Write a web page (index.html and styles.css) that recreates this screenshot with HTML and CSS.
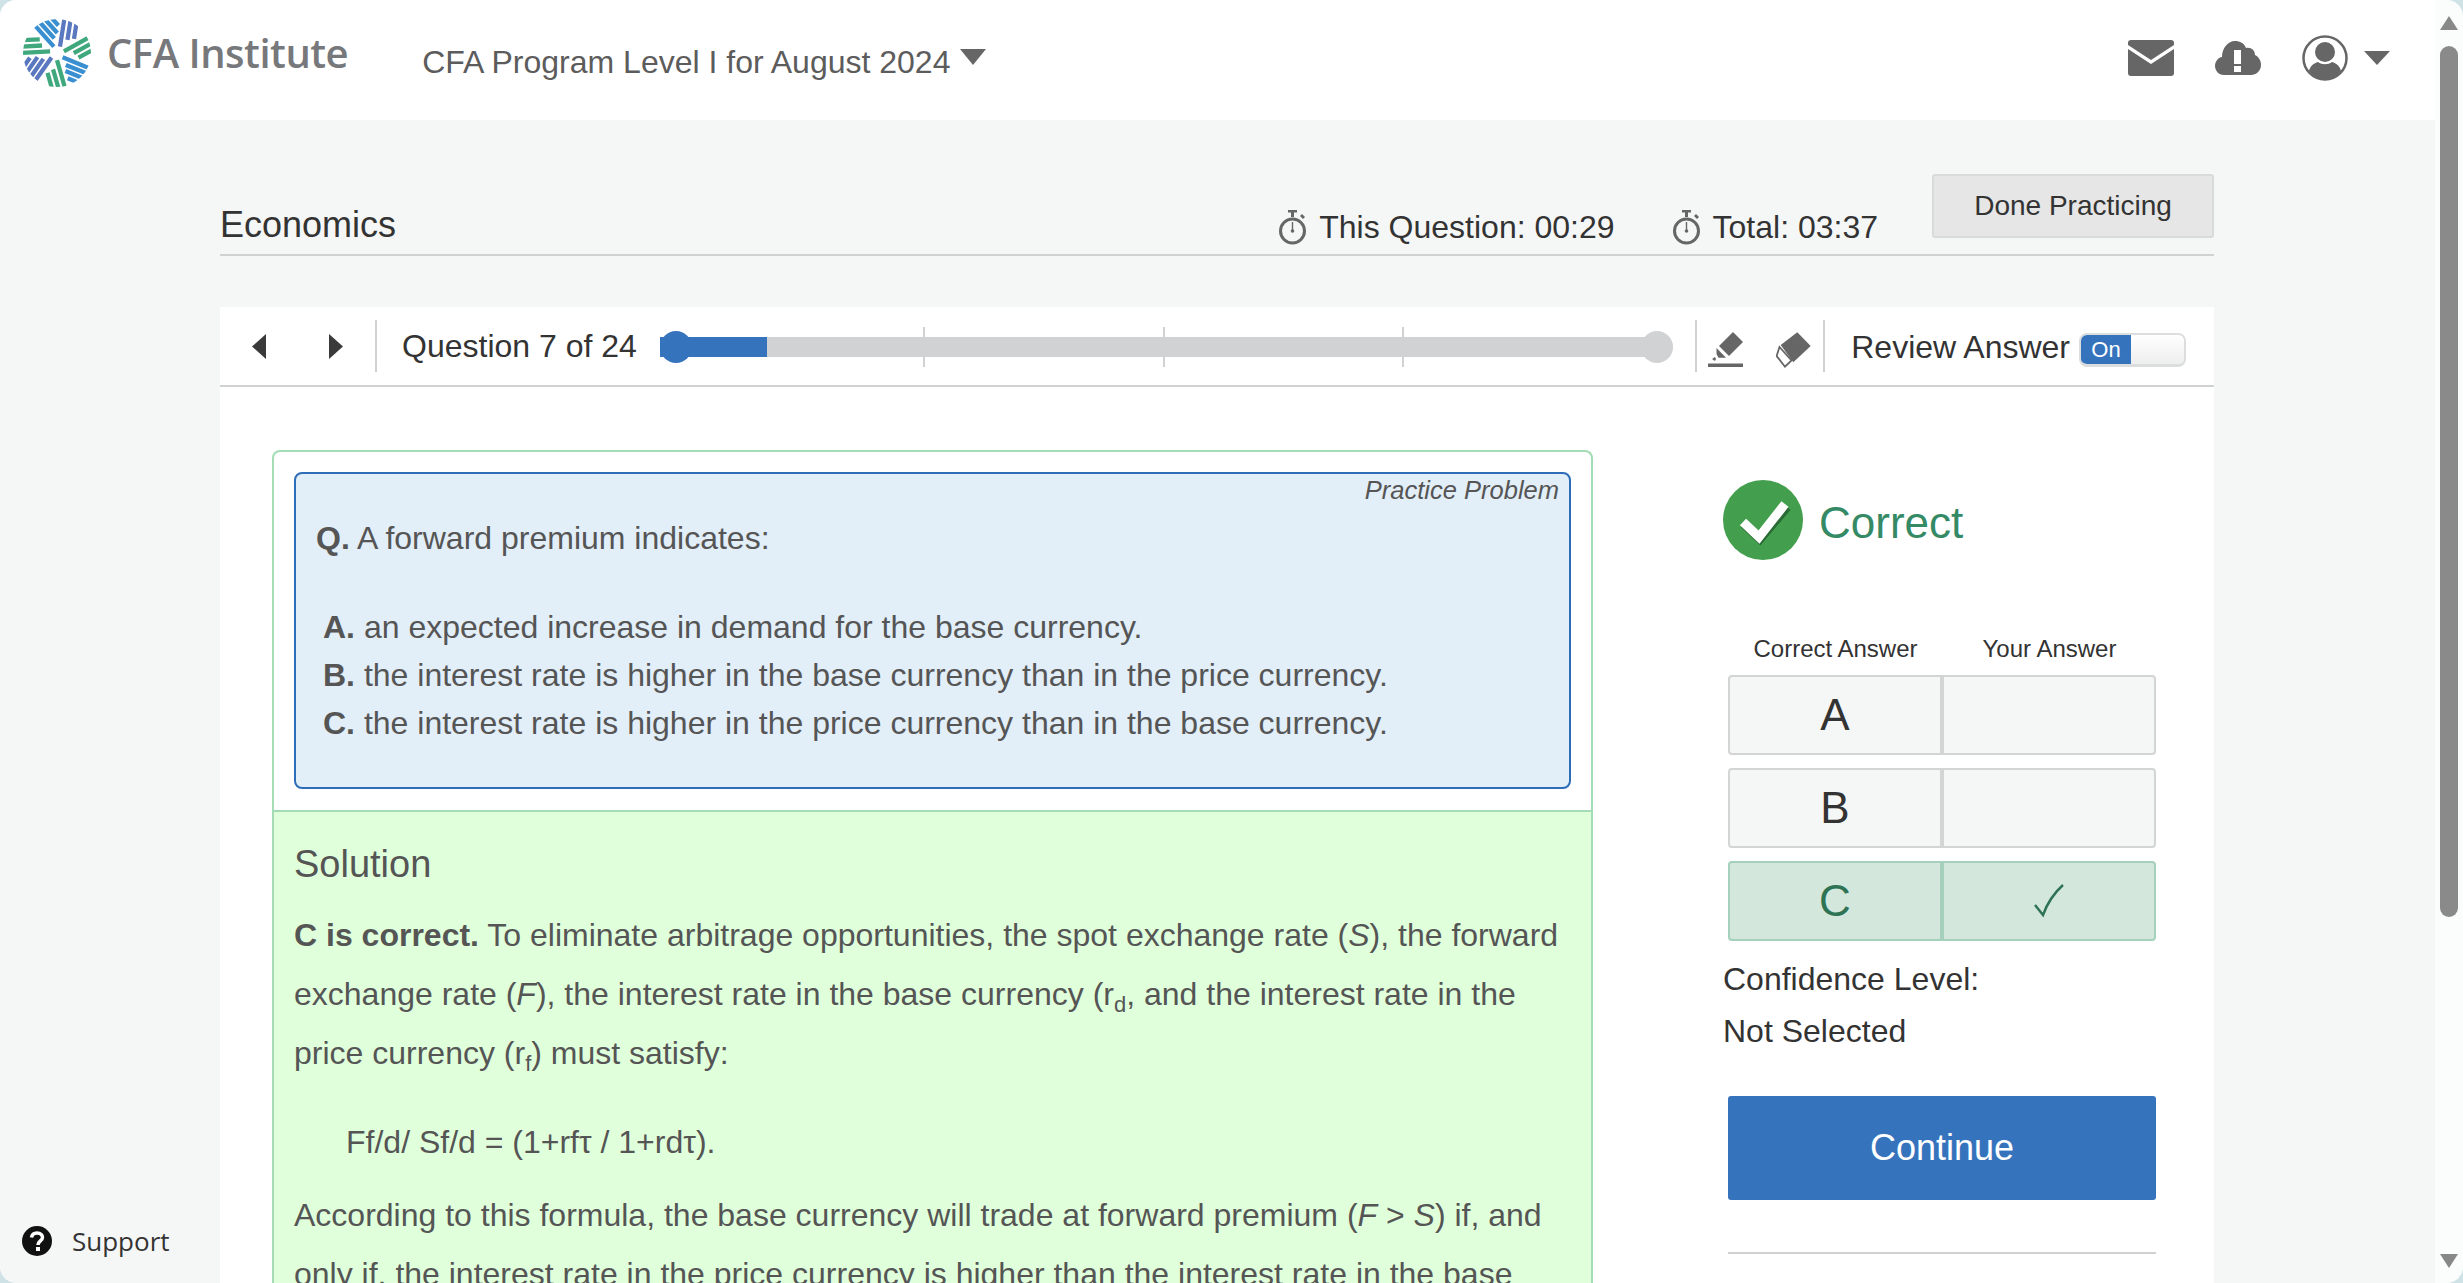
FILE: index.html
```html
<!DOCTYPE html>
<html lang="en">
<head>
  <meta charset="UTF-8" />
  <title>CFA Program Level I - Practice</title>
  <link rel="stylesheet" href="styles.css">
</head>
<body>

<div class="window">
  <div class="page">

    <div class="topbar">
      <svg class="logo" viewBox="-36 -36 72 72">
        <defs>
          <clipPath id="logoClip"><circle r="35"/></clipPath>
          <g id="wedge3" fill="none" stroke-width="4.400">
            <path d="M2-7V-36M8.500-15V-36M15-17V-36"/>
          </g>
          <g id="wedge4" fill="none" stroke-width="4.400">
            <path d="M2-7V-36M8-13V-36M14-15V-36M20-20V-36"/>
          </g>
        </defs>
        <g clip-path="url(#logoClip)">
          <use href="#wedge3" stroke="#5a78c0" transform="rotate(9)"/>
          <use href="#wedge3" stroke="#3fa87c" transform="rotate(61)"/>
          <use href="#wedge4" stroke="#3a8fd1" transform="rotate(112)"/>
          <use href="#wedge3" stroke="#3fa87c" transform="rotate(164)"/>
          <use href="#wedge4" stroke="#5a78c0" transform="rotate(215)"/>
          <use href="#wedge3" stroke="#3fa87c" transform="rotate(267)"/>
          <use href="#wedge4" stroke="#3a8fd1" transform="rotate(318)"/>
        </g>
      </svg>
      <span class="logo-name">CFA Institute</span>
      <span class="program">CFA Program Level I for August 2024</span>
      <svg class="caret-program" viewBox="0 0 26 16"><path d="M0 0H26L13 16Z"/></svg>

      <div class="top-icons">
        <svg class="icon-mail" viewBox="0 0 46 36">
          <path d="M3 0H43Q46 0 46 3V5L23 20 0 5V3Q0 0 3 0Z"/>
          <path d="M0 9L23 24 46 9V33Q46 36 43 36H3Q0 36 0 33Z"/>
        </svg>
        <svg class="icon-cloud" viewBox="0 0 46 34">
          <path fill-rule="evenodd" d="M9 34C3 34 0 29 0 25 0 20 4 16 7 16 7 7 13 0 20 0 25 0 29 2 31 7 36 6 40 9 40 14 44 16 46 20 46 24 46 30 41 34 36 34ZM19 9V23H26V9ZM19 25V31H26V25Z"/>
        </svg>
        <svg class="icon-user" viewBox="0 0 46 46">
          <circle cx="23" cy="23" r="21.500" fill="none" stroke="#666" stroke-width="2.500"/>
          <circle cx="23" cy="17" r="10"/>
          <path d="M7 36C8 31 12 28 16 27 20 30 26 30 30 27 34 28 38 31 39 36 34 42 28 44 23 44 18 44 12 42 7 36Z"/>
        </svg>
        <svg class="caret-user" viewBox="0 0 26 14"><path d="M0 0H26L13 14Z"/></svg>
      </div>
    </div>

    <div class="content">
      <div class="section-head">
        <h1 class="section-title">Economics</h1>
        <div class="timers">
          <div class="timer">
            <svg class="icon-watch" viewBox="0 0 29 36">
              <path d="M10 0H19V2.500H16V7H13V2.500H10Z"/>
              <path d="M24 4L27 7 25 9 22 6Z"/>
              <circle cx="14.500" cy="21" r="12" fill="none" stroke="#666" stroke-width="3"/>
              <path d="M13.800 12H15.200V20H13.800Z"/>
              <circle cx="14.500" cy="21" r="1.800"/>
            </svg>
            This Question: 00:29
          </div>
          <div class="timer">
            <svg class="icon-watch" viewBox="0 0 29 36">
              <path d="M10 0H19V2.500H16V7H13V2.500H10Z"/>
              <path d="M24 4L27 7 25 9 22 6Z"/>
              <circle cx="14.500" cy="21" r="12" fill="none" stroke="#666" stroke-width="3"/>
              <path d="M13.800 12H15.200V20H13.800Z"/>
              <circle cx="14.500" cy="21" r="1.800"/>
            </svg>
            Total: 03:37
          </div>
        </div>
        <button class="done-btn">Done Practicing</button>
      </div>

      <div class="toolbar">
        <div class="tool-arrows">
          <svg class="arrow" viewBox="0 0 14 25"><path d="M14 0V25L0 12.500Z"/></svg>
          <svg class="arrow" viewBox="0 0 14 25"><path d="M0 0V25L14 12.500Z"/></svg>
        </div>
        <div class="question-count">Question 7 of 24</div>
        <div class="slider">
          <div class="slider-fill"></div>
          <span class="slider-tick" style="left: 26%"></span>
          <span class="slider-tick" style="left: 49.700%"></span>
          <span class="slider-tick" style="left: 73.200%"></span>
          <span class="slider-knob"></span>
          <span class="slider-end"></span>
        </div>
        <div class="tool-icons">
          <svg class="tool-icon" viewBox="0 0 36 36">
            <path d="M25 0L35 10 21 24 11 14Z"/>
            <path d="M8.500 16L18 25.700H10.500L8.500 22Z"/>
            <path d="M4 27L7 25 8 27 7 29Z"/>
            <path d="M0 31.500H35V35H0Z"/>
          </svg>
          <svg class="tool-icon" viewBox="0 0 36 36">
            <path d="M21.300 .3L34.700 14 17.300 30.300 4.700 13Z"/>
            <path d="M3.500 15L15.500 28.500 9 34.700 .6 24Z" fill="#fff" stroke="#666" stroke-width="1.800"/>
          </svg>
        </div>
        <div class="review">
          <span class="review-label">Review Answer</span>
          <div class="toggle"><span class="toggle-on">On</span><span class="toggle-off"></span></div>
        </div>
      </div>

      <div class="card">
        <div class="quiz">
          <div class="question">
            <div class="practice-tag">Practice Problem</div>
            <p class="question-text"><b>Q.</b> A forward premium indicates:</p>
            <ul class="options">
              <li><b>A.</b> an expected increase in demand for the base currency.</li>
              <li><b>B.</b> the interest rate is higher in the base currency than in the price currency.</li>
              <li><b>C.</b> the interest rate is higher in the price currency than in the base currency.</li>
            </ul>
          </div>
          <div class="solution">
            <h2 class="solution-title">Solution</h2>
            <p><b>C is correct.</b> To eliminate arbitrage opportunities, the spot exchange rate (<i>S</i>), the forward exchange rate (<i>F</i>), the interest rate in the base currency (r<sub>d</sub>, and the interest rate in the price currency (r<sub>f</sub>) must satisfy:</p>
            <p class="formula">Ff/d/ Sf/d = (1+rfτ / 1+rdτ).</p>
            <p>According to this formula, the base currency will trade at forward premium (<i>F</i> &gt; <i>S</i>) if, and only if, the interest rate in the price currency is higher than the interest rate in the base currency.</p>
          </div>
        </div>

        <div class="result">
          <div class="verdict">
            <svg class="icon-check" viewBox="0 0 80 80">
              <circle cx="40" cy="40" r="40" fill="#439e4d"/>
              <path d="M21 44L37 59 64 27" fill="none" stroke="#2a6b35" stroke-width="9"/>
              <path d="M20 42L36 57 62 24" fill="none" stroke="#fff" stroke-width="9"/>
            </svg>
            <span class="verdict-text">Correct</span>
          </div>
          <div class="answer-heads">
            <span>Correct Answer</span>
            <span>Your Answer</span>
          </div>
          <div class="answer-row">
            <div class="answer-cell">A</div>
            <div class="answer-cell"></div>
          </div>
          <div class="answer-row">
            <div class="answer-cell">B</div>
            <div class="answer-cell"></div>
          </div>
          <div class="answer-row is-right">
            <div class="answer-cell">C</div>
            <div class="answer-cell">
              <svg class="icon-tick" viewBox="0 0 30 34"><path d="M1 21L9 31C13 20 20 9 29 1" fill="none" stroke="#2f7355" stroke-width="2.500"/></svg>
            </div>
          </div>
          <p class="confidence">Confidence Level:</p>
          <p class="confidence">Not Selected</p>
          <button class="continue-btn">Continue</button>
          <div class="result-rule"></div>
        </div>
      </div>
    </div>

    <div class="support">
      <svg class="icon-help" viewBox="0 0 30 30">
        <circle cx="15" cy="15" r="15" fill="#111"/>
        <path d="M9.500 11.500C10 8 12.500 7 15 7 18.500 7 20.500 9 20.500 11.500 20.500 15 16 15 16 19" fill="none" stroke="#fff" stroke-width="3.500"/>
        <path d="M14 21H18V25H14Z" fill="#fff"/>
      </svg>
      Support
    </div>
  </div>

  <div class="scrollbar">
    <svg class="scroll-arrow" viewBox="0 0 18 14"><path d="M9 0L18 14H0Z"/></svg>
    <div class="scroll-thumb"></div>
    <svg class="scroll-arrow" viewBox="0 0 18 14"><path d="M0 0H18L9 14Z"/></svg>
  </div>
</div>

</body>
</html>
```

FILE: styles.css
```css
html, body {
  margin: 0;
  padding: 0;
  height: 1283px;
  overflow: hidden;
  background-color: #cfe3e6;
}

body {
  font-family: "Liberation Sans", Arial, sans-serif;
  color: #333;
}

.window {
  display: flex;
  height: 1283px;
  border-radius: 16px;
  overflow: hidden;
}

.page {
  flex: 1;
  position: relative;
  background-color: #f5f7f6;
  overflow: hidden;
}

/* top bar */
.topbar {
  height: 120px;
  background-color: #fff;
  display: flex;
  align-items: center;
  padding-left: 22px;
  padding-right: 45px;
}

.logo {
  width: 70px;
  height: 70px;
  flex: none;
  margin-top: -14px;
}

.logo-name {
  font-family: "Open Sans", sans-serif;
  font-size: 40px;
  font-weight: 600;
  color: #77787b;
  margin-left: 15px;
  margin-top: -15px;
  letter-spacing: -0.5px;
}

.program {
  font-size: 32px;
  color: #5c5c5c;
  margin-left: 74px;
  margin-top: 4px;
}

.caret-program {
  width: 26px;
  height: 16px;
  fill: #666;
  margin-left: 10px;
  margin-top: -6px;
}

.top-icons {
  margin-left: auto;
  display: flex;
  align-items: center;
  fill: #666;
  margin-top: -5px;
}

.icon-mail {
  width: 46px;
  height: 36px;
}

.icon-cloud {
  width: 46px;
  height: 34px;
  margin-left: 41px;
}

.icon-user {
  width: 46px;
  height: 46px;
  margin-left: 41px;
}

.caret-user {
  width: 26px;
  height: 14px;
  margin-left: 16px;
}

/* section heading */
.content {
  padding: 0 221px 0 220px;
}

.section-head {
  height: 134px;
  border-bottom: 2px solid #d0d1d2;
  display: flex;
  align-items: flex-end;
}

.section-title {
  margin: 0 0 7px 0;
  font-size: 36px;
  font-weight: normal;
  line-height: 44px;
}

.timers {
  margin-left: auto;
  display: flex;
  gap: 57px;
  margin-bottom: 8px;
}

.timer {
  display: flex;
  align-items: center;
  gap: 12px;
  font-size: 32px;
}

.icon-watch {
  width: 29px;
  height: 36px;
  fill: #666;
}

.done-btn {
  width: 282px;
  height: 64px;
  margin: 0 0 16px 54px;
  background-color: #e5e6e5;
  border: 2px solid #d9dadb;
  border-radius: 3px;
  font-family: inherit;
  font-size: 28px;
  color: #333;
}

/* toolbar */
.toolbar {
  margin-top: 51px;
  height: 78px;
  background-color: #fff;
  border-bottom: 2px solid #d0d1d2;
  display: flex;
  align-items: center;
}

.tool-arrows {
  display: flex;
  gap: 63px;
  padding: 0 32px 0 32px;
  height: 52px;
  align-items: center;
  border-right: 2px solid #d0d1d2;
}

.arrow {
  width: 14px;
  height: 25px;
  fill: #3a3a3a;
}

.question-count {
  font-size: 32px;
  margin-left: 25px;
}

.slider {
  position: relative;
  flex: 1;
  height: 20px;
  margin: 2px 22px 0 23px;
  background-color: #d1d2d4;
  border-radius: 10px;
}

.slider-fill {
  width: 107px;
  height: 20px;
  background-color: #3673bd;
}

.slider-tick {
  position: absolute;
  top: -10px;
  width: 2px;
  height: 40px;
  background-color: #d1d2d4;
}

.slider-knob,
.slider-end {
  position: absolute;
  top: -6px;
  width: 32px;
  height: 32px;
  border-radius: 50%;
}

.slider-knob {
  left: 0;
  background-color: #3673bd;
}

.slider-end {
  right: 0;
  background-color: #d1d2d4;
}

.tool-icons {
  display: flex;
  gap: 32px;
  height: 52px;
  align-items: center;
  padding: 0 11px 0 11px;
  border-left: 2px solid #d0d1d2;
  border-right: 2px solid #d0d1d2;
  fill: #666;
}

.tool-icon {
  width: 36px;
  height: 36px;
  margin-top: 8px;
}

.review {
  display: flex;
  align-items: center;
  gap: 9px;
  font-size: 32px;
  margin-left: 26px;
  margin-right: 28px;
}

.review-label {
  margin-top: 3px;
}

.toggle {
  display: flex;
  width: 107px;
  height: 34px;
  margin-top: 8px;
  border: 2px solid #dcdddd;
  border-bottom-width: 3px;
  border-radius: 8px;
  box-sizing: border-box;
  overflow: hidden;
}

.toggle-on {
  width: 50px;
  background-color: #3673bd;
  color: #fff;
  font-size: 22px;
  line-height: 29px;
  text-align: center;
}

.toggle-off {
  flex: 1;
  background-image: linear-gradient(#fff, #eee);
}

/* question and solution */
.card {
  background-color: #fff;
  display: flex;
  height: 900px;
  padding-top: 63px;
  box-sizing: border-box;
}

.quiz {
  width: 1321px;
  margin-left: 52px;
  flex: none;
  border: 2px solid #a3dcb5;
  border-bottom: none;
  border-radius: 8px 8px 0 0;
  box-sizing: border-box;
}

.question {
  position: relative;
  margin: 20px 20px 21px 20px;
  height: 317px;
  background-color: #e2eef8;
  border: 2px solid #2e6db8;
  border-radius: 8px;
  box-sizing: border-box;
  padding: 0 20px 0 20px;
  color: #555;
  font-size: 32px;
}

.practice-tag {
  position: absolute;
  top: 2px;
  right: 10px;
  font-size: 25.500px;
  font-style: italic;
}

.question-text {
  margin: 40px 0 0 0;
  line-height: 48px;
}

.options {
  list-style: none;
  margin: 41px 0 0 7px;
  padding: 0;
  line-height: 48px;
}

.solution {
  background-color: #e0ffdb;
  border-top: 2px solid #a3dcb5;
  padding: 24px 20px 0 20px;
  height: 700px;
  color: #555;
  font-size: 32px;
  line-height: 59px;
}

.solution-title {
  margin: 0;
  font-size: 38px;
  font-weight: normal;
  line-height: 56px;
}

.solution p {
  margin: 14px 0 0 0;
}

.solution sub {
  font-size: 22px;
  line-height: 0;
}

.solution .formula {
  margin: 30px 0 12px 52px;
}

/* result column */
.result {
  margin-left: 130px;
  width: 433px;
  flex: none;
}

.verdict {
  display: flex;
  align-items: center;
  gap: 16px;
  margin-top: 30px;
  font-size: 44px;
  color: #358a66;
}

.verdict-text {
  margin-top: 5px;
}

.icon-check {
  width: 80px;
  height: 80px;
}

.answer-heads {
  display: grid;
  grid-template-columns: 215px 213px;
  margin: 75px 0 0 5px;
  font-size: 24px;
  text-align: center;
  line-height: 28px;
}

.answer-row {
  display: grid;
  grid-template-columns: 214px 1fr;
  height: 80px;
  margin: 13px 0 0 5px;
  width: 428px;
  border: 2px solid #d3d5d5;
  border-radius: 4px;
  background-color: #f5f7f6;
  box-sizing: border-box;
  font-size: 44px;
}

.answer-heads + .answer-row {
  margin-top: 12px;
}

.answer-cell {
  display: flex;
  align-items: center;
  justify-content: center;
}

.answer-cell:first-child {
  border-right: 4px solid #d3d5d5;
}

.answer-row.is-right {
  background-color: #d3e7dd;
  border-color: #a5d0bc;
  color: #2f7355;
}

.answer-row.is-right .answer-cell:first-child {
  border-right-color: #a5d0bc;
}

.icon-tick {
  width: 30px;
  height: 34px;
}

.confidence {
  margin: 0;
  font-size: 32px;
  line-height: 52px;
}

.answer-row + .confidence {
  margin-top: 12px;
}

.continue-btn {
  display: block;
  width: 428px;
  height: 104px;
  margin: 39px 0 0 5px;
  background-color: #3673bd;
  border: none;
  border-radius: 3px;
  color: #fff;
  font-family: inherit;
  font-size: 36px;
}

.result-rule {
  width: 428px;
  height: 2px;
  margin: 52px 0 0 5px;
  background-color: #d0d1d2;
}

/* floating support link */
.support {
  position: absolute;
  left: 22px;
  bottom: 24px;
  display: flex;
  align-items: center;
  gap: 20px;
  font-family: "Open Sans", sans-serif;
  font-size: 26px;
  color: #333;
}

.icon-help {
  width: 30px;
  height: 30px;
}

/* browser scrollbar */
.scrollbar {
  width: 28px;
  flex: none;
  background-color: #fbfcfc;
  display: flex;
  flex-direction: column;
  align-items: center;
  padding-top: 16px;
  box-sizing: border-box;
  fill: #888;
}

.scroll-arrow {
  width: 18px;
  height: 14px;
  flex: none;
}

.scroll-thumb {
  width: 18px;
  height: 871px;
  margin: 16px 0 337px 0;
  background-color: #8a8a8a;
  border-radius: 9px;
  flex: none;
}
```
